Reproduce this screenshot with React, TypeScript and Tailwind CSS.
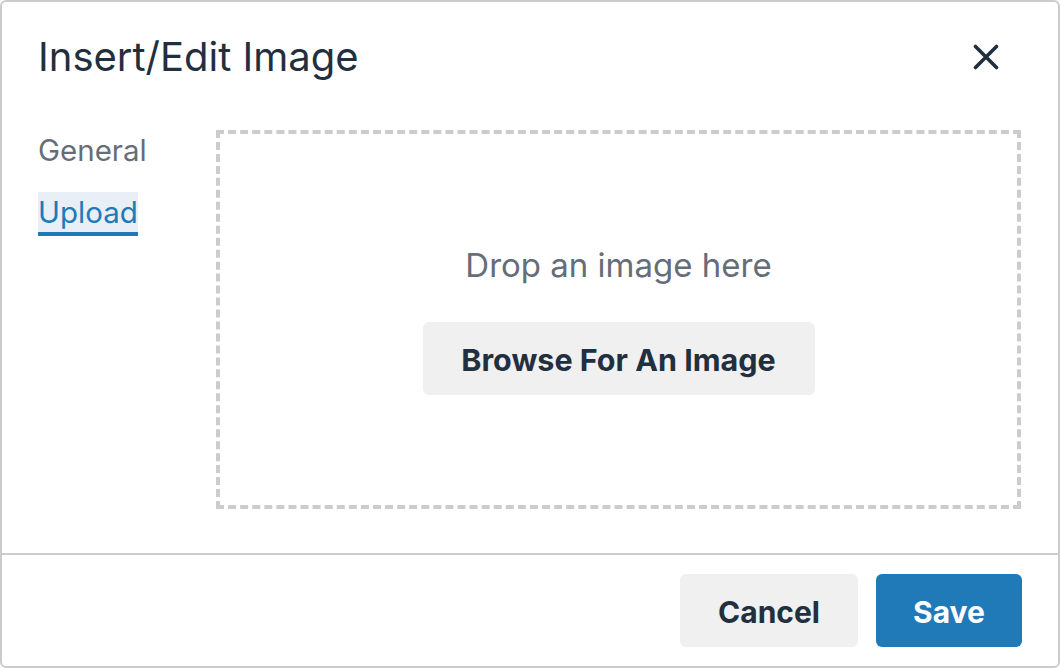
export default function App() {
  return (
    <div className="w-[1060px] h-[668px] bg-white" style={{ fontFamily: "Inter, 'Noto Sans', sans-serif" }}>
      <div className="w-full h-full flex flex-col border-2 border-[#cccccc] rounded-[6px] bg-white text-[#222f3e]">
        {/* header */}
        <div className="flex items-center justify-between pt-[29px] pl-[36px] pr-[48px]">
          <h1 className="text-[40px] leading-[52px] font-normal">Insert/Edit Image</h1>
          <button className="w-[48px] h-[48px] grid place-items-center text-[#222f3e]">
            <svg width="26" height="26" viewBox="0 0 26 26" fill="none" stroke="currentColor" strokeWidth="3.6" strokeLinecap="round">
              <path d="M2.5 2.5L23.5 23.5M23.5 2.5L2.5 23.5" />
            </svg>
          </button>
        </div>

        {/* body */}
        <div className="flex pt-[47px] pl-[36px] pr-[37px] pb-[44px]">
          <div className="w-[178px] flex flex-col items-start gap-[18px] shrink-0">
            <div className="text-[29.5px] leading-[40px] text-[#646d78] border-b-4 border-transparent">General</div>
            <div className="text-[29.5px] leading-[40px] text-[#207ab7] bg-[#e8eff7] border-b-4 border-[#207ab7]">Upload</div>
          </div>
          <div className="w-[805px] h-[379px] border-4 border-dashed border-[#cccccc] flex flex-col items-center justify-center gap-[37px]">
            <div className="text-[33px] leading-[40px] text-[#646d78]">Drop an image here</div>
            <button className="w-[392px] h-[73px] rounded-[6px] bg-[#f0f0f0] text-[30.5px] font-bold text-[#222f3e] pt-[3px]">
              Browse For An Image
            </button>
          </div>
        </div>

        {/* footer */}
        <div className="border-t-2 border-[#cccccc] flex justify-end gap-[18px] pt-[19px] pr-[36px]">
          <button className="w-[178px] h-[73px] rounded-[6px] bg-[#f0f0f0] text-[30px] font-bold text-[#222f3e] pt-[3px]">Cancel</button>
          <button className="w-[146px] h-[73px] rounded-[6px] bg-[#207ab7] text-[30px] font-bold text-white pt-[3px]">Save</button>
        </div>
      </div>
    </div>
  )
}
